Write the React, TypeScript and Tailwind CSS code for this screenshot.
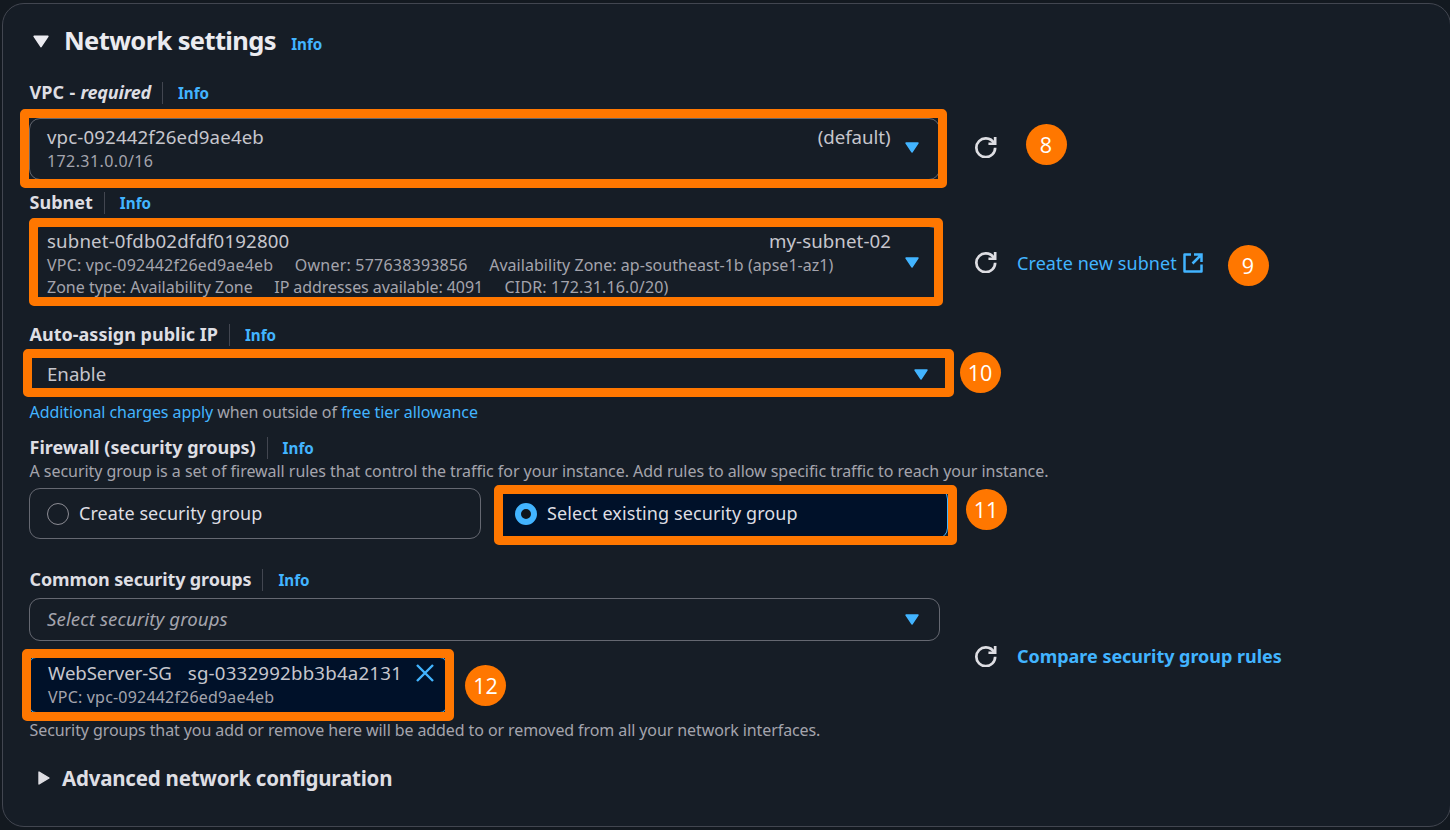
import type { ReactNode } from "react";

function CaretDown({ className }: { className: string }) {
  return (
    <svg viewBox="0 0 14 11" className={className} fill="currentColor" stroke="currentColor" strokeWidth="1.4" strokeLinejoin="round">
      <path d="M1 1h12L7 10z" />
    </svg>
  );
}

function CaretRight() {
  return (
    <svg viewBox="0 0 12 14" className="h-[14px] w-[12px] text-[#dedee3]" fill="currentColor" stroke="currentColor" strokeWidth="1.4" strokeLinejoin="round">
      <path d="M1 1v12l10-6z" />
    </svg>
  );
}

function Refresh() {
  return (
    <svg viewBox="0 0 16 16" className="h-[21.5px] w-[21.5px] shrink-0 text-[#dedee3]" fill="none" stroke="currentColor" strokeWidth="2">
      <path d="M10 5h5V0" />
      <path d="M15 8a6.957 6.957 0 0 1-7 7 6.957 6.957 0 0 1-7-7 6.957 6.957 0 0 1 7-7 6.87 6.87 0 0 1 6.3 4" />
    </svg>
  );
}

function External() {
  return (
    <svg viewBox="0 0 20 20" className="h-[20px] w-[20px] shrink-0" fill="none" stroke="currentColor" strokeWidth="2.5" strokeLinejoin="round">
      <path d="M8 1.5H1.5v17h17V11.5" />
      <path d="M11 1.5h7.5v7.5M18 2L9.5 10.5" strokeLinejoin="miter" />
    </svg>
  );
}

function Info() {
  return <a className="text-[15.2px] font-bold text-[#42b4ff]">Info</a>;
}

function Label({ className, children }: { className: string; children: ReactNode }) {
  return (
    <div className={`flex h-[22px] items-center pl-[0.6px] text-[18px] leading-[22px] font-bold text-[#dedee3] ${className}`}>
      <span>{children}</span>
      <span className="mt-[2px] mr-[15px] ml-[11px] h-[22px] w-px bg-[#424650]" />
      <span className="tracking-normal"><Info /></span>
    </div>
  );
}

function Frame({ className }: { className: string }) {
  return <div className={`pointer-events-none absolute rounded-[5px] border-9 border-[#ff7700] ${className}`} />;
}

function Step({ n, className }: { n: number; className: string }) {
  return (
    <div className={`absolute flex h-[41px] w-[41px] items-center justify-center rounded-full bg-[#ff7700] font-['Open_Sans',sans-serif] text-[21.5px] leading-[41px] text-white ${className}`}>
      {n}
    </div>
  );
}

const box = "relative flex w-[911px] shrink-0 rounded-[11px] border border-[#656871]";

export default function App() {
  return (
    <div className="h-[830px] w-[1450px] overflow-hidden bg-[#131920] pt-[3px] pl-[2px] font-['Noto_Sans',sans-serif] whitespace-nowrap">
      <section className="flex h-[824px] w-[1449px] flex-col rounded-[22px] border border-[#424650] bg-[#161d26] pt-4 pl-[26px]">
        <header className="flex h-[40px] items-baseline pl-[3.5px] leading-[40px]">
          <CaretDown className="h-[13px] w-[16px] -translate-y-[2px] text-[#ebebf0]" />
          <h2 className="ml-[15.5px] text-[25.5px] tracking-[-0.62px] text-[#ebebf0] font-bold">Network settings</h2>
          <span className="ml-[15.2px]"><Info /></span>
        </header>

        <Label className="mt-[21px]">
          VPC <span className="mx-[0.7px]">-</span> <i className="tracking-[-0.22px]">required</i>
        </Label>
        <div className="relative mt-[15px] flex items-center">
          <div className={`${box} h-[62px] items-center pr-[20px] pl-[17px]`}>
            <div className="flex-1">
              <div className="flex h-[24px] justify-between pr-[14.5px] text-[18.67px] leading-[24px] text-[#c6c6cd]">
                <span className="tracking-[0.14px]">vpc-092442f26ed9ae4eb</span>
                <span className="tracking-[-0.05px]">(default)</span>
              </div>
              <div className="h-[24px] text-[16px] leading-[24px] tracking-[0.4px] text-[#a4a4ad]">172.31.0.0/16</div>
            </div>
            <CaretDown className="-mt-[3px] h-[11px] w-[14px] text-[#42b4ff]" />
          </div>
          <span className="-mt-[3px] ml-[35px]"><Refresh /></span>
          <Frame className="-top-[9px] -left-[9px] h-[79px] w-[927px]" />
          <Step n={8} className="top-[6px] left-[996.5px]" />
        </div>

        <Label className="mt-[11px]">Subnet</Label>
        <div className="relative mt-[13px] flex items-center">
          <div className={`${box} h-[74px] items-center pr-[20px] pl-[17px]`}>
            <div className="flex-1 text-[16px] leading-[22px] text-[#a4a4ad]">
              <div className="flex h-[26px] justify-between pr-[14px] text-[18.67px] leading-[26px] text-[#c6c6cd]">
                <span className="tracking-[0.16px]">subnet-0fdb02dfdf0192800</span>
                <span className="tracking-[0.08px]">my-subnet-02</span>
              </div>
              <div className="flex gap-[21.5px]">
                <span className="tracking-[0.19px]">VPC: vpc-092442f26ed9ae4eb</span>
                <span className="tracking-[0.21px]">Owner: 577638393856</span>
                <span className="tracking-[0.03px]">Availability Zone: ap-southeast-1b (apse1-az1)</span>
              </div>
              <div className="flex gap-[21.5px]">
                <span>Zone type: Availability Zone</span>
                <span className="tracking-[-0.07px]">IP addresses available: 4091</span>
                <span className="tracking-[0.15px]">CIDR: 172.31.16.0/20)</span>
              </div>
            </div>
            <CaretDown className="-mt-[2px] h-[11px] w-[14px] text-[#42b4ff]" />
          </div>
          <span className="-mt-[1px] ml-[35px]"><Refresh /></span>
          <a className="ml-[20.5px] flex items-center gap-[6px] text-[18px] leading-[24px] tracking-[0.09px] text-[#42b4ff]">
            Create new subnet
            <External />
          </a>
          <Frame className="-top-[8px] left-0 h-[88px] w-[914px]" />
          <Step n={9} className="top-[19px] left-[1198.5px]" />
        </div>

        <Label className="mt-[23px]">Auto-assign public IP</Label>
        <div className="relative mt-[13px]">
          <div className="flex h-[32px] w-[918px] items-center justify-between pr-[19px] pl-[18px] text-[18.67px] leading-[32px] text-[#c6c6cd]">
            <span>Enable</span>
            <CaretDown className="h-[11px] w-[14px] text-[#42b4ff]" />
          </div>
          <Frame className="-top-[9px] -left-[6px] h-[48px] w-[931px]" />
          <Step n={10} className="-top-[6px] left-[930.5px]" />
        </div>
        <p className="mt-[12px] h-[20px] pl-[0.6px] text-[16px] leading-[20px] tracking-[-0.08px] text-[#a4a4ad]">
          <a className="text-[#42b4ff]">Additional charges apply</a> when outside of <a className="text-[#42b4ff]">free tier allowance</a>
        </p>

        <Label className="mt-[14px] tracking-[-0.02px]">Firewall (security groups)</Label>
        <p className="mt-[3px] h-[20px] pl-[0.5px] text-[16px] leading-[20px] tracking-[-0.039px] text-[#a4a4ad]">
          A security group is a set of firewall rules that control the traffic for your instance. Add rules to allow specific traffic to reach your instance.
        </p>
        <div className="relative mt-[7px] flex gap-[15px] text-[18px] leading-[24px] tracking-[0.08px] text-[#dedee3]">
          <div className="flex h-[51px] w-[452px] items-center gap-[10px] rounded-[11px] border border-[#656871] pl-[17px]">
            <span className="h-[22px] w-[22px] rounded-full border border-[#8c8c94]" />
            <span className="-mt-[2px] tracking-[0.05px]">Create security group</span>
          </div>
          <div className="flex h-[51px] w-[452px] items-center gap-[10px] rounded-[11px] border border-[#42b4ff] bg-[#001129] pl-[18px]">
            <span className="h-[22px] w-[22px] rounded-full border-[6.5px] border-[#42b4ff] bg-[#0f141a]" />
            <span className="-mt-[2px] tracking-[0.11px]">Select existing security group</span>
          </div>
          <Frame className="-top-[3px] left-[465px] h-[60px] w-[463px]" />
          <Step n={11} className="top-[1px] left-[936.5px]" />
        </div>

        <Label className="mt-[29px] tracking-[-0.14px]">Common security groups</Label>
        <div className="mt-[8px] flex items-center">
          <div>
            <div className={`${box} h-[43px] items-center justify-between pr-[20px] pl-[17px]`}>
              <span className="-mt-[1px] text-[18.67px] leading-[40px] tracking-[0.08px] text-[#a4a4ad] italic">Select security groups</span>
              <CaretDown className="h-[11px] w-[14px] text-[#42b4ff]" />
            </div>
            <div className="relative mt-[16px] h-[56px] w-[418px] rounded-[7px] border border-[#42b4ff] bg-[#001129] pt-[3px] pl-[18px]">
              <div className="flex h-[24px] items-center text-[18.67px] leading-[24px] text-[#c6c6cd]">
                <span className="tracking-[-0.1px]">WebServer-SG</span>
                <span className="ml-[16px] tracking-[0.21px]">sg-0332992bb3b4a2131</span>
                <svg viewBox="0 0 18 18" className="ml-[14px] h-[18px] w-[18px] text-[#42b4ff]" fill="none" stroke="currentColor" strokeWidth="2.4">
                  <path d="M1 1l16 16M17 1L1 17" />
                </svg>
              </div>
              <div className="h-[24px] text-[16px] leading-[24px] tracking-[0.19px] text-[#a4a4ad]">VPC: vpc-092442f26ed9ae4eb</div>
              <Frame className="-top-[9px] -left-[8px] h-[72px] w-[432px]" />
              <Step n={12} className="top-[7px] left-[435px]" />
            </div>
          </div>
          <span className="mt-[2px] ml-[35px]"><Refresh /></span>
          <a className="ml-[20.5px] text-[18px] leading-[24px] font-bold tracking-[-0.03px] text-[#42b4ff]">Compare security group rules</a>
        </div>
        <p className="mt-[7px] h-[20px] pl-[0.6px] text-[16px] leading-[20px] tracking-[-0.094px] text-[#a4a4ad]">
          Security groups that you add or remove here will be added to or removed from all your network interfaces.
        </p>

        <div className="mt-[24px] flex h-[28px] items-center gap-[12px] pl-[9px] text-[20.5px] leading-[28px] font-bold tracking-[-0.22px] text-[#dedee3]">
          <CaretRight />
          Advanced network configuration
        </div>
      </section>
    </div>
  );
}
